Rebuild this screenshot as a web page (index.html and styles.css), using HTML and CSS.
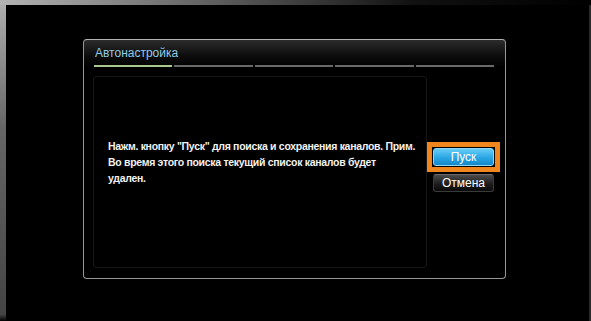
FILE: index.html
```html
<!DOCTYPE html>
<html lang="ru">
<head>
  <meta charset="UTF-8">
  <title>Автонастройка</title>
  <link rel="stylesheet" href="styles.css">
</head>
<body>

  <!-- экран телевизора -->
  <div class="screen">
    <div class="dialog">
      <h1 class="dialog-title">Автонастройка</h1>

      <!-- шаги мастера -->
      <div class="steps">
        <span class="step active"></span>
        <span class="step"></span>
        <span class="step"></span>
        <span class="step"></span>
        <span class="step"></span>
      </div>

      <div class="dialog-body">
        <div class="message">
          <p>Нажм. кнопку "Пуск" для поиска и сохранения каналов. Прим.<br>Во время этого поиска текущий список каналов будет<br>удален.</p>
        </div>
        <div class="actions">
          <div class="focus">
            <button class="btn btn-start">Пуск</button>
          </div>
          <button class="btn btn-cancel">Отмена</button>
        </div>
      </div>
    </div>
  </div>

</body>
</html>
```

FILE: styles.css
```css
* { margin: 0; padding: 0; box-sizing: border-box; }
body { background: #000; font-family: "Liberation Sans", Arial, sans-serif; }

.screen {
  width: 591px;
  height: 321px;
  padding: 39px 0 0 83px;
  background:
    linear-gradient(to right, #b4b4b4, #4a4a4a 45%, #111 70%, #000) top left / 100% 5px no-repeat,
    linear-gradient(#b0b0b0, #666 40%, #444 98%, #000) top left / 6px 100% no-repeat,
    linear-gradient(#2a2a2a, #2a2a2a) top right / 2px 100% no-repeat,
    #000;
}

.dialog {
  width: 423px;
  height: 240px;
  border: 1px solid #969696;
  border-top-color: #b4b4b4;
  border-radius: 4px;
  background: linear-gradient(#2c2c2c, #0c0c0c 16px, #000 28px);
  padding: 6px 0 0 10px;
}

.dialog-title {
  font-size: 12px;
  font-weight: normal;
  line-height: 14px;
  color: #8ecae6;
  padding-left: 1px;
}

.steps {
  display: flex;
  gap: 2px;
  width: 400px;
  margin-top: 5px;
}
.step {
  flex: 1;
  height: 2px;
  background: #6a6a6a;
}
.step.active { background: #a9c98f; }

.dialog-body {
  display: flex;
  margin-top: 9px;
}

.message {
  width: 334px;
  height: 192px;
  margin-left: -1px;
  border: 1px solid #171717;
  border-radius: 3px;
  padding: 61px 0 0 14px;
}
.message p {
  font-weight: bold;
  font-size: 10.5px;
  letter-spacing: -0.3px;
  line-height: 16px;
  color: #f2f2f2;
  white-space: nowrap;
}

.actions {
  width: 73px;
  padding-top: 66px;
  display: flex;
  flex-direction: column;
  align-items: center;
}

.focus {
  width: 73px;
  height: 30px;
  border: 5px solid #f0861e;
  padding: 1px;
  display: flex;
  justify-content: center;
  align-items: center;
}

.btn {
  width: 61px;
  height: 18px;
  border-radius: 3px;
  font-family: "Liberation Sans", Arial, sans-serif;
  font-size: 12px;
  color: #fff;
  line-height: 16px;
}
.btn-start {
  border: 1px solid #8fd8f8;
  background: linear-gradient(#66cdf6, #2aa6e4 55%, #1588c8);
}
.btn-cancel {
  margin-top: 2px;
  border: 1px solid #3a3a3a;
  border-top-color: #6a6a6a;
  background: linear-gradient(#4a4a4a, #1a1a1a 60%, #0a0a0a);
}
```
